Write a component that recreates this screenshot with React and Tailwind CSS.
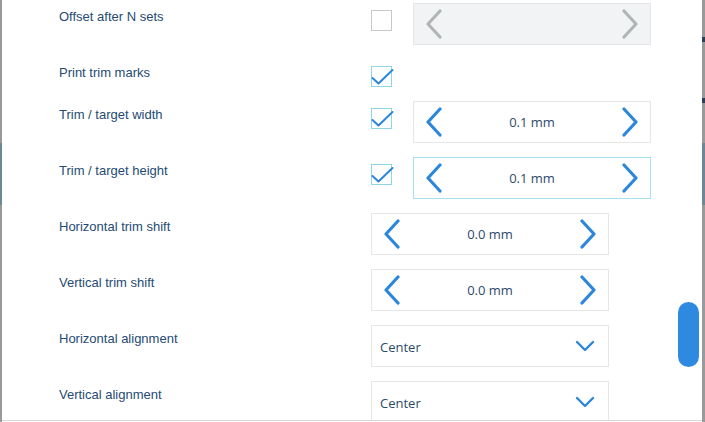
function ChevronLeft({ className }) {
  return (
    <svg width="18" height="30" viewBox="0 0 18 30" fill="none" className={className} aria-hidden>
      <path d="M15 2 L3 15 L15 28" stroke="currentColor" strokeWidth="3.2" strokeLinecap="round" strokeLinejoin="round" />
    </svg>
  );
}

function ChevronRight({ className }) {
  return (
    <svg width="18" height="30" viewBox="0 0 18 30" fill="none" className={className} aria-hidden>
      <path d="M3 2 L15 15 L3 28" stroke="currentColor" strokeWidth="3.2" strokeLinecap="round" strokeLinejoin="round" />
    </svg>
  );
}

function ChevronDown() {
  return (
    <svg width="20" height="12" viewBox="0 0 20 12" fill="none" className="text-[#2b86dc]" aria-hidden>
      <path d="M2 2 L10 10 L18 2" stroke="currentColor" strokeWidth="2.4" strokeLinecap="round" strokeLinejoin="round" />
    </svg>
  );
}

function Checkbox({ checked }) {
  if (!checked) {
    return <span className="mt-[7px] mr-[21px] block h-[21px] w-[21px] shrink-0 border border-[#c6c9cc] bg-white" />;
  }
  return (
    <span className="relative mt-[7px] mr-[21px] block h-[21px] w-[21px] shrink-0 border border-[#8fd6ea] bg-white">
      <svg width="23" height="21" viewBox="0 0 23 21" fill="none" className="absolute -left-px -top-px" aria-hidden>
        <path d="M1.5 12 L7.5 17.5 L21.5 4" stroke="#2b86dc" strokeWidth="2" strokeLinecap="round" strokeLinejoin="round" />
      </svg>
    </span>
  );
}

function Stepper({ value, disabled, focused }) {
  const box = disabled
    ? "border-[#e3e5e8] bg-[#f2f3f5]"
    : focused
      ? "border-[#a6e0ee] bg-white"
      : "border-[#e6e6e6] bg-white";
  const icon = disabled ? "text-[#b0b6b8]" : "text-[#2b86dc]";
  return (
    <div className={`flex h-[42px] w-[238px] items-center justify-between border px-[11px] ${box}`}>
      <ChevronLeft className={icon} />
      <span className="pt-[2px] font-['Open_Sans',sans-serif] text-[13px] text-[#2d4a69]">{value}</span>
      <ChevronRight className={icon} />
    </div>
  );
}

function Select({ value }) {
  return (
    <div className="flex h-[42px] w-[238px] items-center justify-between border border-[#e6e6e6] bg-white pl-[8px] pr-[13px]">
      <span className="pt-[3px] font-['Open_Sans',sans-serif] text-[13px] text-[#2d4a69]">{value}</span>
      <ChevronDown />
    </div>
  );
}

function Row({ label, children, short }) {
  return (
    <div className={`flex ${short ? "h-[28px]" : "h-[42px]"}`}>
      <div className="w-[312px] shrink-0 pt-[6px] font-['Liberation_Sans',Arial,sans-serif] text-[13px] leading-[16px] text-[#254b73]">
        {label}
      </div>
      <div className="flex">{children}</div>
    </div>
  );
}

export default function App() {
  return (
    <div className="flex h-[422px] w-[705px] overflow-hidden bg-[#9a9a9a]">
      <div className="flex w-[2px] flex-col">
        <div className="h-[143px]" />
        <div className="h-[62px] bg-[#6f8794]" />
      </div>

      <div className="relative flex w-[700px] flex-col bg-white">
        <div className="h-[420px] overflow-hidden pl-[57px] pt-[3px]">
          <div className="flex flex-col gap-[14px]">
            <Row label="Offset after N sets">
              <Checkbox checked={false} />
              <Stepper value="" disabled />
            </Row>
            <Row label="Print trim marks" short>
              <Checkbox checked />
            </Row>
            <Row label="Trim / target width">
              <Checkbox checked />
              <Stepper value="0.1 mm" />
            </Row>
            <Row label="Trim / target height">
              <Checkbox checked />
              <Stepper value="0.1 mm" focused />
            </Row>
            <Row label="Horizontal trim shift">
              <Stepper value="0.0 mm" />
            </Row>
            <Row label="Vertical trim shift">
              <Stepper value="0.0 mm" />
            </Row>
            <Row label="Horizontal alignment">
              <Select value="Center" />
            </Row>
            <Row label="Vertical alignment">
              <Select value="Center" />
            </Row>
          </div>
        </div>
        <div className="h-px bg-[#d6d6d6]" />
        <div className="h-px bg-white" />

        <div className="absolute left-[676px] top-[302px] h-[65px] w-[21px] rounded-full bg-[#2e8ae0]" />
      </div>

      <div className="flex w-[3px] flex-col">
        <div className="h-[37px]" />
        <div className="h-[5px] bg-[#2c3e55]" />
        <div className="h-[56px]" />
        <div className="h-[5px] bg-[#2c3e55]" />
        <div className="h-[40px]" />
        <div className="h-[62px] bg-[#6f8794]" />
      </div>
    </div>
  );
}
